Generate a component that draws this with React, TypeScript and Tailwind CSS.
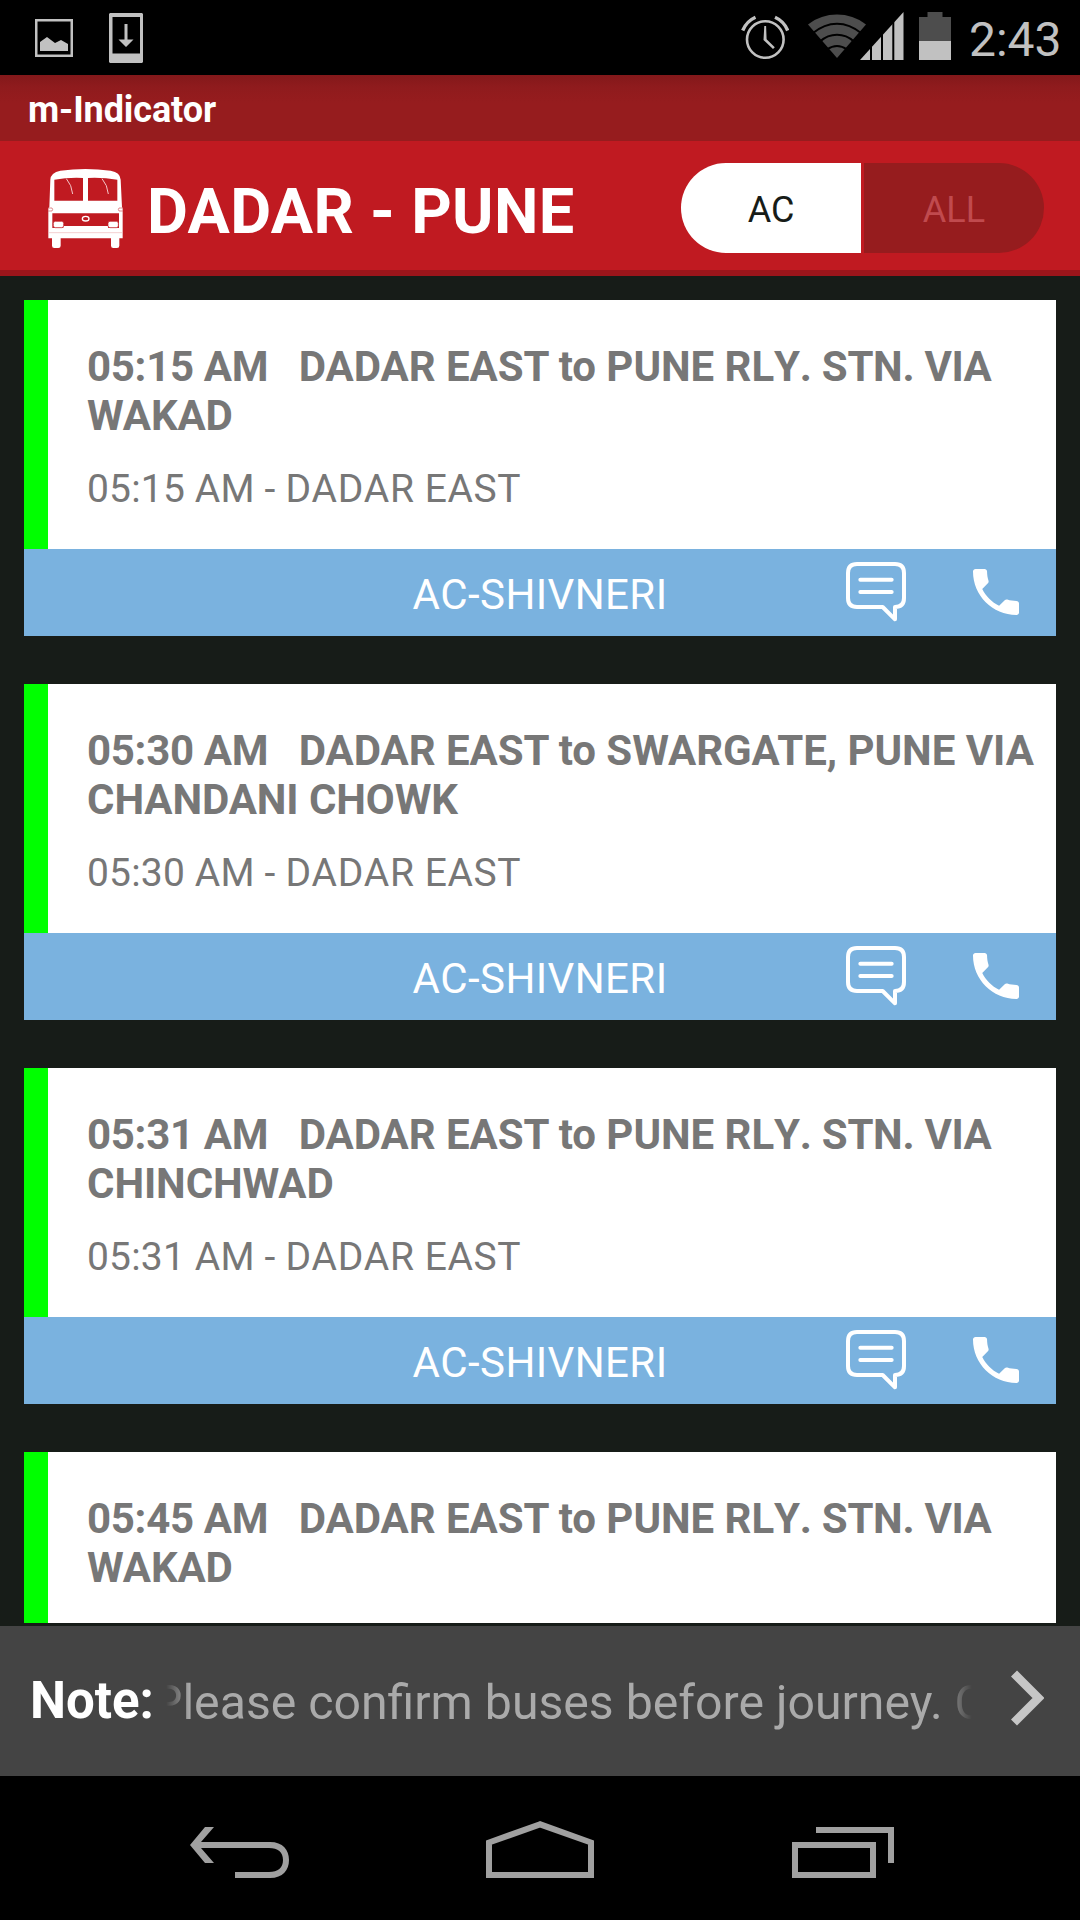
import React from "react";

type Bus = { time: string; route: string; tail: string; via: string; stop?: string; type?: string };

const buses: Bus[] = [
  { time: "05:15 AM", route: "DADAR EAST to PUNE RL", tail: "Y. STN. VIA", via: "WAKAD", stop: "DADAR EAST", type: "AC-SHIVNERI" },
  { time: "05:30 AM", route: "DADAR EAST to SWARGATE, PUNE VIA", tail: "", via: "CHANDANI CHOWK", stop: "DADAR EAST", type: "AC-SHIVNERI" },
  { time: "05:31 AM", route: "DADAR EAST to PUNE RL", tail: "Y. STN. VIA", via: "CHINCHWAD", stop: "DADAR EAST", type: "AC-SHIVNERI" },
  { time: "05:45 AM", route: "DADAR EAST to PUNE RL", tail: "Y. STN. VIA", via: "WAKAD" },
];

const StatusBar = () => (
  <div className="h-[75px] shrink-0 bg-black flex items-start justify-between pl-[35px] pr-[19px]">
    <div className="flex items-start">
      <svg className="mt-[19px] w-[38px] h-[38px]" viewBox="0 0 38 38">
        <rect x="1.25" y="1.25" width="35.5" height="35.5" fill="none" stroke="#c1c1c1" strokeWidth="2.5" />
        <path d="M5 32V23l7-5 8 6 6-3 7 4v7z" fill="#c1c1c1" />
      </svg>
      <svg className="ml-9 mt-[13px] w-[34px] h-[50px]" viewBox="0 0 34 50">
        <path d="M1 0h32l1 1v48l-1 1H1l-1-1V1zM3.500 4v36.500h27.500V4z" fill="#c1c1c1" fillRule="evenodd" />
        <path d="M15.500 11h3v15.500h6L17 34l-7.500-7.500h6z" fill="#c1c1c1" />
      </svg>
    </div>
    <div className="flex items-start">
      <svg className="mt-[15px] w-[48px] h-[45px]" viewBox="0 0 48 45" fill="none" stroke="#c1c1c1">
        <circle cx="24.300" cy="24.500" r="18.300" strokeWidth="2.600" />
        <path d="M1.700 15.500C4.200 9.500 8 5.200 14.500 2.300M46.700 15.500C44.200 9.500 40.500 5.200 34 2.300" strokeWidth="3.400" />
        <path d="M23.300 11h1.800l.5 13.300 8.200 8-1.800 1.800-9.500-9z" fill="#c1c1c1" stroke="none" />
      </svg>
      <svg className="ml-[19px] mt-[12px] w-[96px] h-[48px]" viewBox="0 0 96 48">
        <path d="M0 12.500C17-.8 41-.8 58 12.500L29 46z" fill="#4d4d4d" />
        <path d="M5 21C20 8.500 38 8.500 53 21M12 29.500C22 20.500 36 20.500 46 29.500M19 37.500C26 32.500 32 32.500 39 37.500" fill="none" stroke="#000" strokeWidth="2" />
        <path d="M52 48L95.500 0V48z" fill="#c1c1c1" />
        <path d="M63 0v48M74 0v48M85.300 0v48" stroke="#000" strokeWidth="2" />
      </svg>
      <svg className="ml-[15px] mt-[12px] w-[32px] h-[48px]" viewBox="0 0 32 48">
        <path d="M0 5h8.500V0h15v5H32v24H0z" fill="#4d4d4d" />
        <path d="M0 29h32v19H0z" fill="#c1c1c1" />
      </svg>
      <span className="ml-[18px] mt-[12px] w-[92px] text-[48px] leading-[56px] text-[#c1c1c1]">2:43</span>
    </div>
  </div>
);

const BusIcon = () => (
  <svg className="w-[75px] h-[79px]" viewBox="0 0 225 237">
    <path
      fill="#fff"
      fillRule="evenodd"
      d="M7 32Q8 11 37 5Q112-5 188 5Q217 10 218 32L222 114L224 117V208H214V230Q214 237 207 237H196Q189 237 189 230V208H38V230Q38 237 31 237H19Q12 237 12 230V208H1V117L4 114ZM19 32V95H105V27Q60 25 19 32ZM120 27V95H208V32Q165 25 120 27ZM13 133V177H213V133Z"
    />
    <path d="M1 117H12Q16 121 12 126H1M224 117H213Q209 121 213 126H224" fill="none" stroke="#c01a21" strokeWidth="1.500" />
    <path d="M3 191H222" stroke="#e8a0a3" strokeWidth="1.500" />
    <path d="M46 177V171H180V177Z" fill="#fff" />
    <rect x="16" y="157" width="31" height="19" rx="6" fill="#fff" stroke="#c01a21" strokeWidth="2" />
    <rect x="180" y="157" width="31" height="19" rx="6" fill="#fff" stroke="#c01a21" strokeWidth="2" />
    <ellipse cx="113" cy="149" rx="10" ry="7" fill="none" stroke="#fff" strokeWidth="4" />
    <path d="M55 29L68 50L74 75M162 29L175 50L181 75" fill="none" stroke="#f4c6c8" strokeWidth="3" />
  </svg>
);

const MessageIcon = () => (
  <svg className="w-[60px] h-[60px]" viewBox="0 0 180 180" fill="none" stroke="#fff" strokeWidth="12" strokeLinejoin="round" strokeLinecap="round">
    <path d="M33 6H147Q174 6 174 33V108Q174 135 147 135V172L110 135H33Q6 135 6 108V33Q6 6 33 6Z" />
    <path d="M43 53H137M43 90H137" />
  </svg>
);

const PhoneIcon = () => (
  <svg className="w-[46px] h-[46px]" viewBox="3 3 18 18" fill="#fff">
    <path d="M6.620 10.790c1.440 2.830 3.760 5.140 6.590 6.590l2.200-2.200c.27-.27.67-.36 1.020-.24 1.120.37 2.330.57 3.570.57.550 0 1 .45 1 1V20c0 .55-.45 1-1 1-9.390 0-17-7.610-17-17 0-.55.450-1 1-1h3.500c.55 0 1 .45 1 1 0 1.250.2 2.450.57 3.570.11.350.030.740-.25 1.020l-2.200 2.200z" />
  </svg>
);

const BusCard = ({ bus }: { bus: Bus }) => (
  <div className="shrink-0">
    <div className="h-[249px] bg-white border-l-[24px] border-[#00ff00] pl-[39px] pt-[42px] text-[#777777]">
      <p className="text-[42px] leading-[49px] font-bold whitespace-pre tracking-[-0.05px]">
        <span className="tracking-[-0.3px]">{bus.time}{"   "}</span>
        {bus.route}
        <span className="[font-kerning:none] tracking-[-0.3px]">{bus.tail}</span>
      </p>
      <p className="text-[42px] leading-[49px] font-bold whitespace-pre tracking-[-0.1px]">{bus.via}</p>
      {bus.stop && (
        <p className="mt-[26px] text-[39px] leading-[46px] whitespace-pre [font-kerning:none] tracking-[0.18px]">
          {bus.time} - <span className="tracking-[0.6px]">{bus.stop}</span>
        </p>
      )}
    </div>
    {bus.type && (
      <div className="h-[87px] bg-[#7ab2df] grid grid-cols-[1fr_auto_1fr] items-center">
        <span className="col-start-2 pt-[3px] text-[42px] leading-[49px] text-white [font-kerning:none] tracking-[0.4px]">{bus.type}</span>
        <div className="flex items-center justify-end gap-[67px] pr-[37px] pb-px">
          <MessageIcon />
          <PhoneIcon />
        </div>
      </div>
    )}
  </div>
);

const NavBar = () => (
  <div className="h-[144px] shrink-0 bg-black flex items-start justify-between pl-[190px] pr-[186px] pt-[45px]">
    <svg className="mt-[6px] w-[99px] h-[51px]" viewBox="0 0 99 51">
      <path d="M15 0h9L11 15h69c13 0 19 8 19 18s-6 18-19 18H45v-6h34c9 0 14-4 14-12s-5-12-14-12H11l13 15h-9L0 18z" fill="#a0a0a0" />
    </svg>
    <svg className="w-[108px] h-[57px] mr-px" viewBox="0 0 108 57">
      <path d="M54 3.300L3 21.500V54H105V21.500Z" fill="none" stroke="#a0a0a0" strokeWidth="6" />
    </svg>
    <svg className="mt-[6px] w-[102px] h-[51px]" viewBox="0 0 102 51" fill="none" stroke="#a0a0a0" strokeWidth="6">
      <path d="M3 18H81V48H3ZM24 3H99V36" />
    </svg>
  </div>
);

const App = () => {
  return (
    <div className="w-[1080px] h-[1920px] overflow-hidden flex flex-col bg-[#171c18] font-['Roboto',sans-serif]">
      <StatusBar />

      <div className="h-[66px] shrink-0 bg-[#961c1e] bg-[linear-gradient(#83181a,#8f1b1d_12px,#961c1e_28px)] pl-[28px] pt-[14px]">
        <h1 className="text-[36px] leading-[42px] font-bold text-white whitespace-nowrap tracking-[-0.1px]">m-Indicator</h1>
      </div>

      <div className="h-[135px] shrink-0 bg-[#c01a21] border-b-[6px] border-[#9b151b] flex items-start pl-[48px] pr-[36px]">
        <div className="mt-[28px]">
          <BusIcon />
        </div>
        <h2 className="ml-[24px] mt-[34px] text-[63px] leading-[74px] font-bold text-white whitespace-nowrap tracking-[0.3px]">DADAR - PUNE</h2>
        <div className="ml-auto mt-[22px] flex gap-[3px] text-[36px] leading-[94px] text-center">
          <div className="w-[180px] h-[90px] rounded-l-full bg-white text-[#171c18]">AC</div>
          <div className="w-[180px] h-[90px] rounded-r-full bg-[#961c1e] text-[#c04a4e]">ALL</div>
        </div>
      </div>

      <div className="h-[1347px] shrink-0 overflow-hidden flex flex-col gap-12 px-6 pt-6">
        {buses.map((bus) => (
          <BusCard key={bus.time} bus={bus} />
        ))}
      </div>

      <div className="mt-[3px] h-[150px] shrink-0 bg-[#444444] flex items-start pl-[30px] pr-[36px]">
        <span className="mt-[45px] w-[136px] text-[51px] leading-[60px] font-bold text-white">Note:</span>
        {/* marquee fades out at both edges */}
        <div className="mt-[47px] w-[806px] overflow-hidden [mask-image:linear-gradient(90deg,transparent,#000_24px,#000_775px,transparent)]">
          <p className="-ml-[14px] text-[48.2px] leading-[60px] text-[#aaaaaa] whitespace-nowrap">Please confirm buses before journey. C</p>
        </div>
        <svg className="ml-auto mt-[44px] w-[33px] h-[56px]" viewBox="0 0 33 56">
          <path d="M3 3.500L27.500 28L3 52.500" fill="none" stroke="#c6c6c6" strokeWidth="8.500" />
        </svg>
      </div>

      <NavBar />
    </div>
  );
};

export default App;
